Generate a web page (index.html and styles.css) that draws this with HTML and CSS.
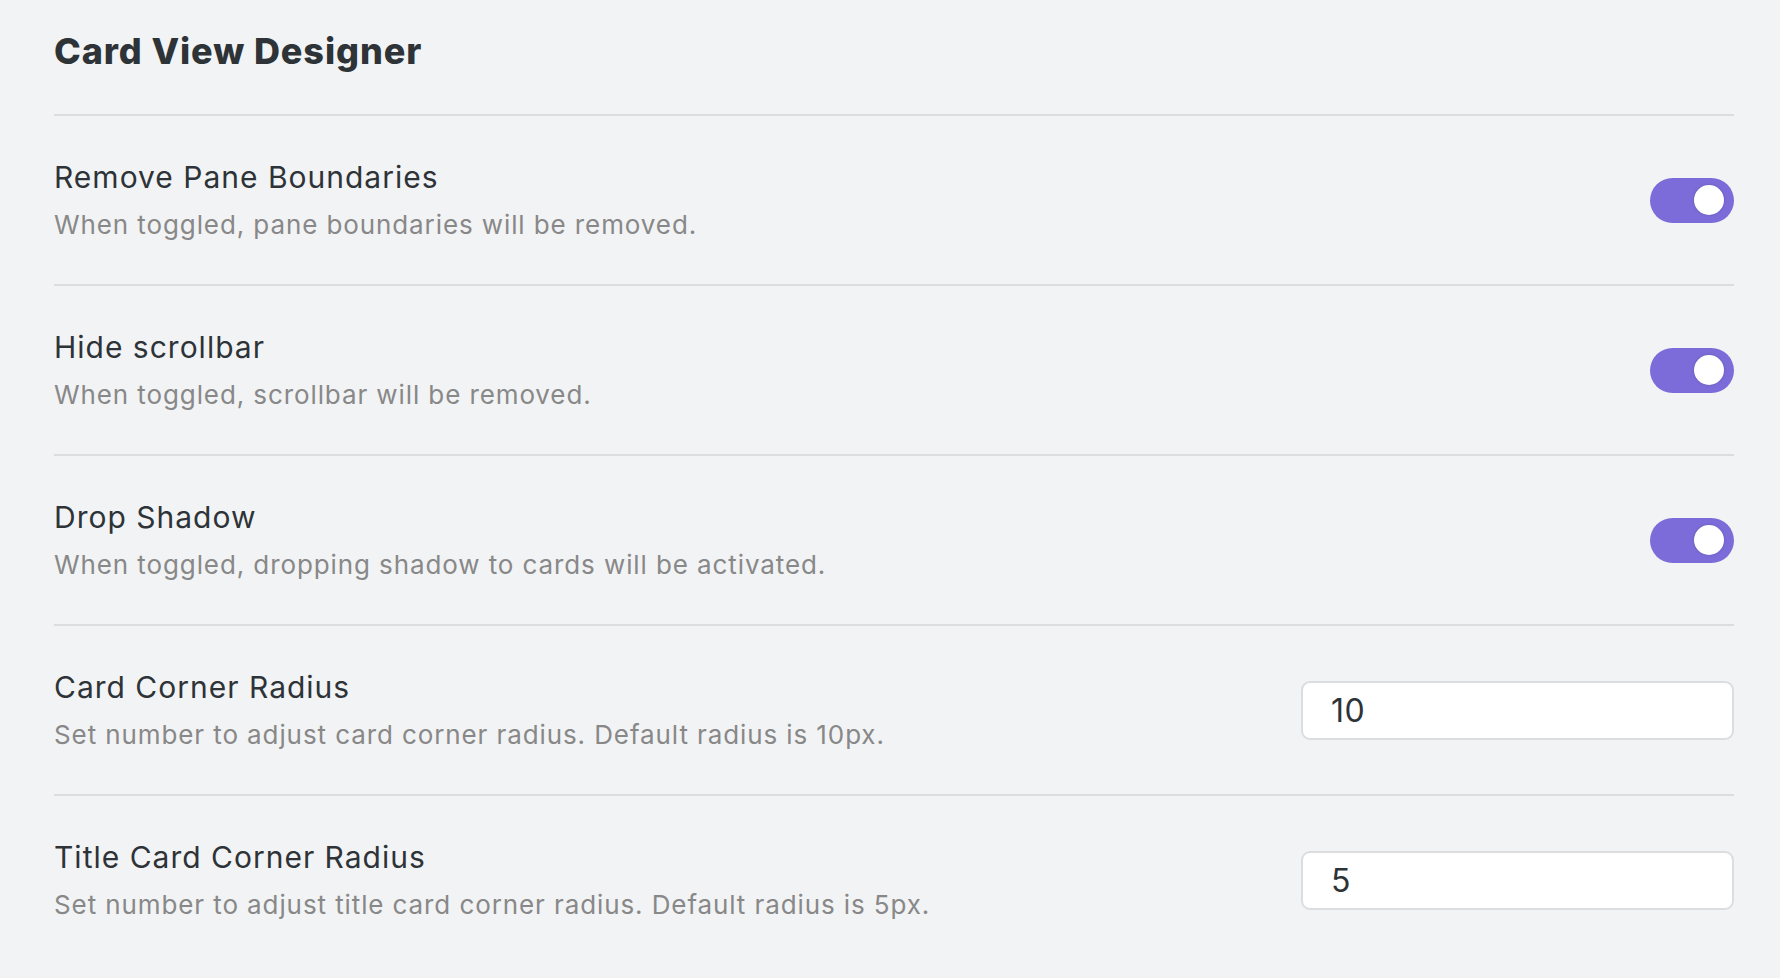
FILE: index.html
```html
<!DOCTYPE html>
<html lang="en">
<head>
<meta charset="utf-8">
<title>Card View Designer</title>
<link rel="stylesheet" href="styles.css">
</head>
<body>
<div class="settings">
  <h2 class="heading">Card View Designer</h2>

  <div class="item">
    <div class="info">
      <div class="name">Remove Pane Boundaries</div>
      <div class="desc">When toggled, pane boundaries will be removed.</div>
    </div>
    <div class="control">
      <div class="toggle is-on"><span class="knob"></span></div>
    </div>
  </div>

  <div class="item">
    <div class="info">
      <div class="name">Hide scrollbar</div>
      <div class="desc">When toggled, scrollbar will be removed.</div>
    </div>
    <div class="control">
      <div class="toggle is-on"><span class="knob"></span></div>
    </div>
  </div>

  <div class="item">
    <div class="info">
      <div class="name">Drop Shadow</div>
      <div class="desc">When toggled, dropping shadow to cards will be activated.</div>
    </div>
    <div class="control">
      <div class="toggle is-on"><span class="knob"></span></div>
    </div>
  </div>

  <div class="item">
    <div class="info">
      <div class="name">Card Corner Radius</div>
      <div class="desc">Set number to adjust card corner radius. Default radius is 10px.</div>
    </div>
    <div class="control">
      <input class="text-input" type="text" value="10">
    </div>
  </div>

  <div class="item">
    <div class="info">
      <div class="name">Title Card Corner Radius</div>
      <div class="desc">Set number to adjust title card corner radius. Default radius is 5px.</div>
    </div>
    <div class="control">
      <input class="text-input" type="text" value="5">
    </div>
  </div>
</div>
</body>
</html>
```

FILE: styles.css
```css
html, body {
  margin: 0;
  padding: 0;
  background: #f2f3f5;
}

body {
  font-family: Inter, "Noto Sans", "Liberation Sans", sans-serif;
  color: #2e3338;
}

.settings {
  padding: 30px 46px 0 54px;
}

.heading {
  margin: 0 0 41px;
  font-size: 36px;
  line-height: 43px;
  font-weight: 800;
  letter-spacing: 0.9px;
  color: #2e3338;
}

.item {
  display: flex;
  align-items: center;
  justify-content: space-between;
  box-sizing: border-box;
  height: 170px;
  border-top: 2px solid #dcdddf;
}

.info {
  display: flex;
  flex-direction: column;
  padding-bottom: 2px;
}

.name {
  font-size: 30px;
  line-height: 45px;
  letter-spacing: 1px;
  color: #2e3338;
}

.desc {
  margin-top: 5px;
  font-size: 26px;
  line-height: 39px;
  letter-spacing: 0.9px;
  color: #888888;
}

.control {
  display: flex;
  align-items: center;
}

.toggle {
  display: flex;
  align-items: center;
  justify-content: flex-end;
  box-sizing: border-box;
  width: 84px;
  height: 45px;
  padding-right: 10px;
  border-radius: 23px;
  background: #7b6cd9;
}

.knob {
  display: block;
  width: 30px;
  height: 30px;
  border-radius: 50%;
  background: #ffffff;
  box-shadow: 0 0 3px rgba(0, 0, 0, 0.18);
}

.text-input {
  box-sizing: border-box;
  width: 433px;
  height: 59px;
  padding: 0 28px;
  border: 2px solid #dcdddf;
  border-radius: 9px;
  background: #ffffff;
  font-family: Inter, "Noto Sans", "Liberation Sans", sans-serif;
  font-size: 32px;
  letter-spacing: 0.5px;
  color: #2e3338;
  outline: none;
}
```
